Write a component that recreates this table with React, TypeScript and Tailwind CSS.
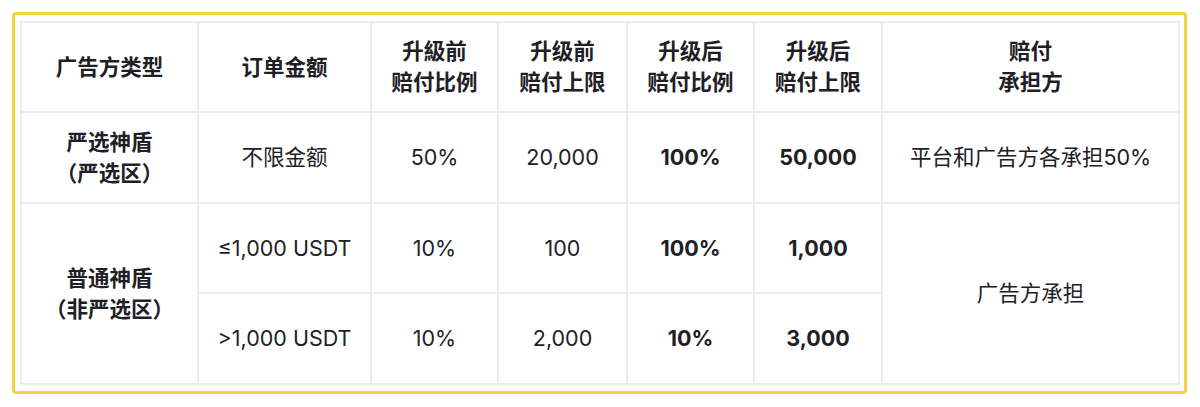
const font = {
  fontFamily: 'Inter, "Noto Sans CJK SC", sans-serif',
};

const cell = 'border-2 border-[#ececec] text-center align-middle p-0';

export default function App() {
  return (
    <div className="w-[1200px] h-[407px] bg-white pt-[12px] pl-[12px]">
      <div
        className="w-[1175px] h-[382px] border-[3px] border-[#f5d43b] rounded-[4px] pt-[6px] pl-[5px] bg-white"
      >
        <table
          className="border-collapse table-fixed w-[1158px] text-[21.5px] leading-[31px] text-[#1e2026]"
          style={font}
        >
          <colgroup>
            <col className="w-[177px]" />
            <col className="w-[173px]" />
            <col className="w-[127px]" />
            <col className="w-[129px]" />
            <col className="w-[127px]" />
            <col className="w-[128px]" />
            <col className="w-[297px]" />
          </colgroup>
          <thead>
            <tr className="h-[90px] font-semibold">
              <th className={cell}>广告方类型</th>
              <th className={cell}>订单金额</th>
              <th className={cell}>升級前<br />赔付比例</th>
              <th className={cell}>升级前<br />赔付上限</th>
              <th className={cell}>升级后<br />赔付比例</th>
              <th className={cell}>升级后<br />赔付上限</th>
              <th className={cell}>赔付<br />承担方</th>
            </tr>
          </thead>
          <tbody>
            <tr className="h-[91px]">
              <td className={`${cell} font-semibold`}>严选神盾<br />（严选区）</td>
              <td className={cell}>不限金额</td>
              <td className={cell}>50%</td>
              <td className={cell}>20,000</td>
              <td className={`${cell} font-bold`}>100%</td>
              <td className={`${cell} font-bold`}>50,000</td>
              <td className={cell}>平台和广告方各承担50%</td>
            </tr>
            <tr className="h-[90px]">
              <td className={`${cell} font-semibold`} rowSpan={2}>普通神盾<br />（非严选区）</td>
              <td className={cell}>≤1,000 USDT</td>
              <td className={cell}>10%</td>
              <td className={cell}>100</td>
              <td className={`${cell} font-bold`}>100%</td>
              <td className={`${cell} font-bold`}>1,000</td>
              <td className={cell} rowSpan={2}>广告方承担</td>
            </tr>
            <tr className="h-[91px]">
              <td className={cell}>&gt;1,000 USDT</td>
              <td className={cell}>10%</td>
              <td className={cell}>2,000</td>
              <td className={`${cell} font-bold`}>10%</td>
              <td className={`${cell} font-bold`}>3,000</td>
            </tr>
          </tbody>
        </table>
      </div>
    </div>
  );
}
